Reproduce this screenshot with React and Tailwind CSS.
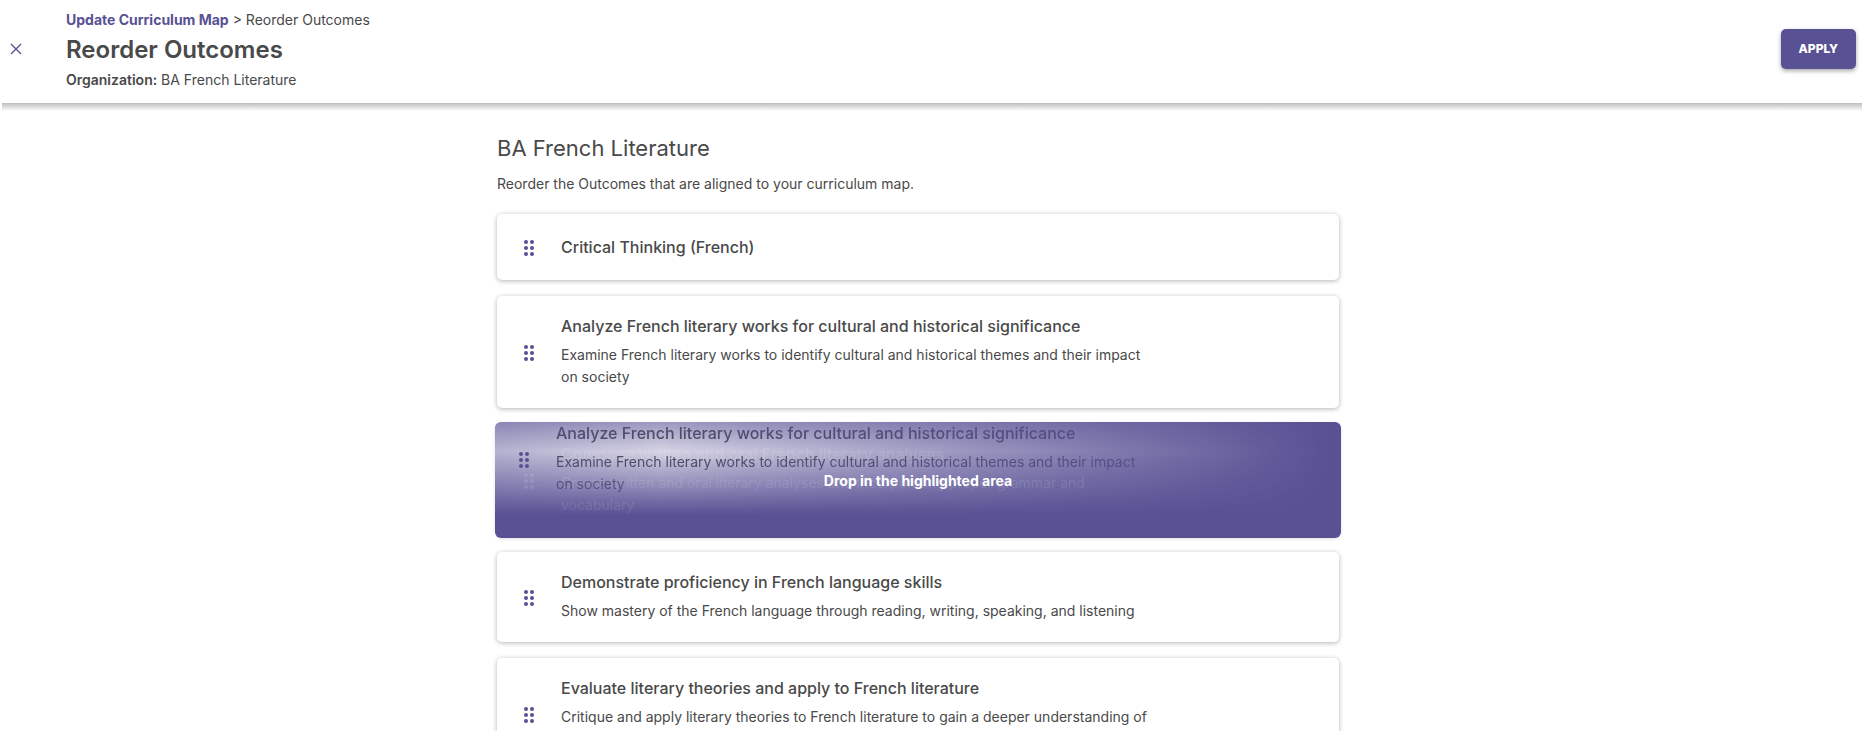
import { useState } from "react";

const outcomes = [
  { id: 1, title: "Critical Thinking (French)" },
  {
    id: 2,
    title: "Analyze French literary works for cultural and historical significance",
    description:
      "Examine French literary works to identify cultural and historical themes and their impact on society",
  },
  {
    id: 3,
    title: "Compose written and oral French literary analyses",
    description:
      "Create written and oral literary analyses and incorporating proper grammar and vocabulary",
  },
  {
    id: 4,
    title: "Demonstrate proficiency in French language skills",
    description:
      "Show mastery of the French language through reading, writing, speaking, and listening",
  },
  {
    id: 5,
    title: "Evaluate literary theories and apply to French literature",
    description:
      "Critique and apply literary theories to French literature to gain a deeper understanding of the text",
  },
];

function DragHandle() {
  return (
    <svg width="10" height="16" viewBox="0 0 10 16" fill="currentColor" aria-hidden="true">
      <circle cx="2" cy="2" r="2" />
      <circle cx="8" cy="2" r="2" />
      <circle cx="2" cy="8" r="2" />
      <circle cx="8" cy="8" r="2" />
      <circle cx="2" cy="14" r="2" />
      <circle cx="8" cy="14" r="2" />
    </svg>
  );
}

function OutcomeContent({ outcome }) {
  return (
    <div className="flex items-center">
      <button
        type="button"
        aria-label={`Move ${outcome.title}`}
        className="flex w-16 shrink-0 cursor-grab justify-center pt-0.5 text-[#585194]"
      >
        <DragHandle />
      </button>
      <div className={outcome.description ? "pt-[18px] pb-5" : "py-[21px]"}>
        <h3 className="text-base leading-6 font-medium">{outcome.title}</h3>
        {outcome.description && (
          <p className="mt-1.5 max-w-[590px] text-sm leading-[22px]">{outcome.description}</p>
        )}
      </div>
    </div>
  );
}

function App() {
  const [dragged] = useState(outcomes[1]);
  const [dropTarget] = useState(3);

  return (
    <div className="h-screen overflow-hidden bg-white font-[Inter,sans-serif] text-[#494949]">
      <header className="mx-0.5 flex items-center justify-between bg-white pt-1.5 pr-1.5 pb-[11px] pl-2">
        <div className="flex items-center">
          <button type="button" aria-label="Close" className="mr-11 text-[#585194]">
            <svg width="12" height="12" viewBox="0 0 12 12" stroke="currentColor" strokeWidth="1.4">
              <path d="M1 1l10 10M11 1L1 11" />
            </svg>
          </button>
          <div className="pt-0.5">
            <nav className="text-sm leading-6">
              <a href="#map" className="font-bold text-[#585194]">
                Update Curriculum Map
              </a>{" "}
              &gt; Reorder Outcomes
            </nav>
            <h1 className="text-2xl leading-9 font-semibold">Reorder Outcomes</h1>
            <p className="text-sm leading-6">
              <span className="font-semibold">Organization:</span> BA French Literature
            </p>
          </div>
        </div>
        <button
          type="button"
          className="h-10 rounded-[5px] bg-[#585194] px-[18px] text-xs font-extrabold text-white shadow-[0_2px_4px_rgba(0,0,0,0.35)]"
        >
          APPLY
        </button>
      </header>
      <div className="mx-0.5 h-2 bg-linear-to-b from-[#bdbdbd] to-white" />

      <main className="pt-[21px] pr-7">
        <div className="mx-auto max-w-[842px]">
          <h2 className="text-[22px] leading-8">BA French Literature</h2>
          <p className="mt-2 text-sm leading-6">
            Reorder the Outcomes that are aligned to your curriculum map.
          </p>

          <ul className="mt-[18px] flex flex-col gap-4">
            {outcomes.map((outcome) => (
              <li
                key={outcome.id}
                className="relative rounded-[5px] bg-white shadow-[0_1px_5px_rgba(0,0,0,0.3)]"
              >
                <OutcomeContent outcome={outcome} />
                {outcome.id === dropTarget && (
                  <div className="absolute -inset-0.5 overflow-hidden rounded-md bg-[#585194]">
                    {/* item that is about to be replaced */}
                    <div className="absolute inset-0.5 text-white opacity-10 [&_button]:text-white">
                      <OutcomeContent outcome={outcome} />
                    </div>
                    {/* dragged item, faded out around the pointer */}
                    <div className="absolute -top-[19px] -left-[3px] h-28 w-full bg-white opacity-75 [mask-composite:intersect] [mask-image:linear-gradient(to_bottom,rgba(0,0,0,0.25),black_48px,transparent_112px),linear-gradient(to_right,rgba(0,0,0,0.75),black_170px,transparent_840px)]">
                      <OutcomeContent outcome={dragged} />
                    </div>
                    <p className="absolute inset-0 flex items-center justify-center pt-0.5 text-sm font-bold text-white">
                      Drop in the highlighted area
                    </p>
                  </div>
                )}
              </li>
            ))}
          </ul>
        </div>
      </main>
    </div>
  );
}

export default App;
